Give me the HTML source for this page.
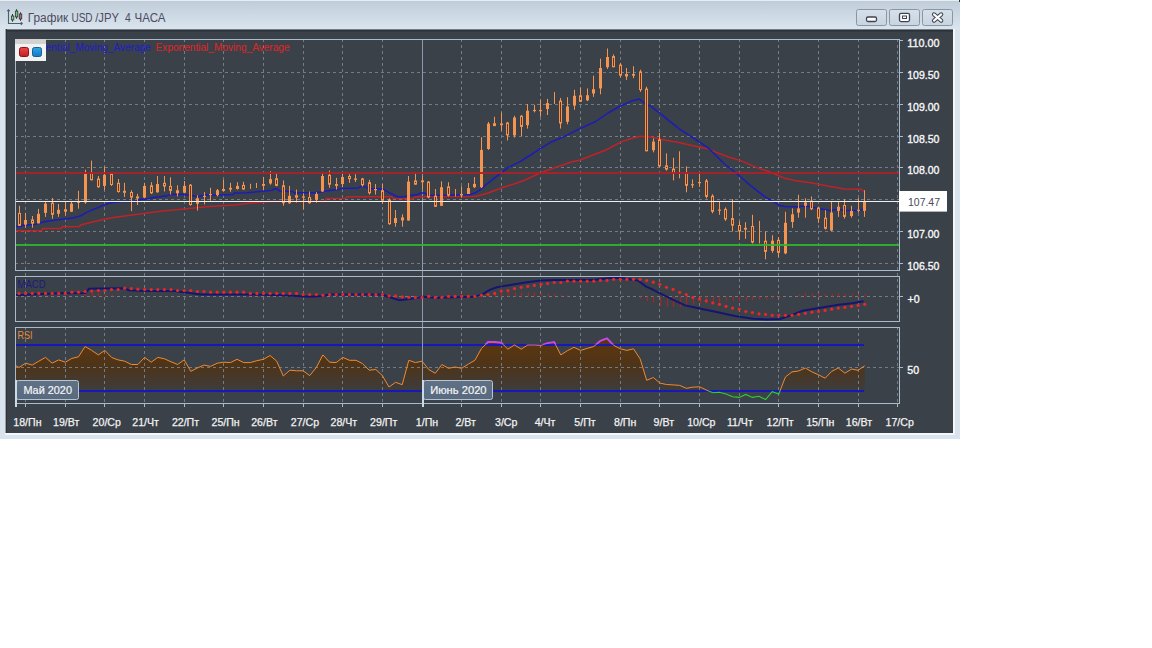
<!DOCTYPE html><html><head><meta charset="utf-8"><title>chart</title><style>html,body{margin:0;padding:0;background:#fff;width:1152px;height:648px;overflow:hidden}svg{position:absolute;left:0;top:0;font-family:"Liberation Sans",sans-serif}</style></head><body>
<svg width="1152" height="648" viewBox="0 0 1152 648">
<defs>
<linearGradient id="tb" x1="0" y1="0" x2="0" y2="1"><stop offset="0" stop-color="#c0cdd8"/><stop offset="1" stop-color="#d9e4ee"/></linearGradient>
<linearGradient id="btn" x1="0" y1="0" x2="0" y2="1"><stop offset="0" stop-color="#d6e0ea"/><stop offset="1" stop-color="#c8d4e0"/></linearGradient>
<linearGradient id="rsif" gradientUnits="userSpaceOnUse" x1="0" y1="345" x2="0" y2="391"><stop offset="0" stop-color="#5a3610"/><stop offset="0.45" stop-color="#4e3418"/><stop offset="1" stop-color="#3d3d3e"/></linearGradient>
<linearGradient id="redsq" x1="0" y1="0" x2="0" y2="1"><stop offset="0" stop-color="#f04848"/><stop offset="1" stop-color="#c01c24"/></linearGradient>
<linearGradient id="bluesq" x1="0" y1="0" x2="0" y2="1"><stop offset="0" stop-color="#30a8e8"/><stop offset="1" stop-color="#1478c0"/></linearGradient>
<linearGradient id="lblg" x1="0" y1="0" x2="0" y2="1"><stop offset="0" stop-color="#607186"/><stop offset="1" stop-color="#59697e"/></linearGradient>
</defs>
<rect x="0" y="0" width="960" height="439" fill="#d9e3ed"/>
<rect x="0" y="1" width="960" height="28" fill="url(#tb)"/>
<rect x="0" y="0" width="960" height="1" fill="#e6edf4"/>
<rect x="959" y="0" width="1" height="2" fill="#333"/>
<rect x="5" y="29" width="950" height="406" fill="#f4f7fa"/>
<rect x="5" y="29" width="948" height="404" fill="#3a4149"/>
<rect x="5" y="29" width="948" height="1" fill="#767c84"/>
<rect x="5" y="30" width="948" height="1.5" fill="#2c3239"/>
<rect x="5" y="29" width="1" height="404" fill="#9aa0a6"/>
<rect x="6" y="29" width="1" height="404" fill="#2e343a"/>
<g fill="none"><path d="M8.5 10 V23.5 H22" stroke="#4c5e6c" stroke-width="1.1"/><path d="M7 11 L8.5 9.3 L10 11 Z M21 22 L22.8 23.5 L21 25 Z" fill="#4c5e6c" stroke="#4c5e6c" stroke-width="0.6"/><path d="M12.5 14 V21.7 M16.6 9.2 V18.8 M20.5 12.3 V20.8" stroke="#2c3a34" stroke-width="1"/></g><rect x="11.4" y="16" width="2.4" height="3.9" fill="#8cc890" stroke="#2e4a34" stroke-width="0.9"/><rect x="15.4" y="11.1" width="2.4" height="5.8" fill="#7cc080" stroke="#2e4a34" stroke-width="0.9"/><rect x="19.3" y="14" width="2.4" height="4.9" fill="#a87888" stroke="#4a2e3a" stroke-width="0.9"/>
<text x="27.8" y="22" font-size="12" fill="#4d4b5f" textLength="40.4" lengthAdjust="spacingAndGlyphs">График</text>
<text x="71.4" y="22" font-size="12" fill="#4d4b5f" textLength="21.2" lengthAdjust="spacingAndGlyphs">USD</text>
<text x="95.2" y="22" font-size="12" fill="#4d4b5f" textLength="23.8" lengthAdjust="spacingAndGlyphs">/JPY</text>
<text x="124.9" y="22" font-size="12" fill="#4d4b5f" textLength="5.8" lengthAdjust="spacingAndGlyphs">4</text>
<text x="134.6" y="22" font-size="12" fill="#4d4b5f" textLength="30.9" lengthAdjust="spacingAndGlyphs">ЧАСА</text>
<rect x="856.5" y="9.5" width="30" height="16" rx="2" fill="url(#btn)" stroke="#8a96a4" stroke-width="1"/>
<rect x="889.5" y="9.5" width="30" height="16" rx="2" fill="url(#btn)" stroke="#8a96a4" stroke-width="1"/>
<rect x="922.5" y="9.5" width="30" height="16" rx="2" fill="url(#btn)" stroke="#8a96a4" stroke-width="1"/>
<rect x="866.5" y="17" width="10" height="4.5" rx="1.5" fill="#fbfcfd" stroke="#3e4450" stroke-width="1.3"/>
<rect x="899.5" y="13.3" width="10" height="8.3" rx="1.5" fill="#fbfcfd" stroke="#3e4450" stroke-width="1.3"/>
<rect x="902.5" y="16" width="4" height="2.5" fill="none" stroke="#3e4450" stroke-width="1"/>
<path d="M934 14.4 L941.2 20.6 M941.2 14.4 L934 20.6" stroke="#3e4450" stroke-width="4.2" stroke-linecap="round"/>
<path d="M934 14.4 L941.2 20.6 M941.2 14.4 L934 20.6" stroke="#fbfcfd" stroke-width="2.1" stroke-linecap="round"/>
<path d="M15.5 365.5 L19 367.5 L25.6 363.2 L32.2 365.1 L38.8 361.2 L45.5 357.4 L52.1 363.2 L58.7 359.9 L65.3 362.2 L71.9 358.4 L78.5 356.8 L85.1 346.5 L91.7 350.4 L98.3 354.9 L104.9 350.4 L111.5 357.4 L118.1 359.9 L124.7 361.2 L131.3 364.5 L137.9 364.5 L144.6 357.4 L151.2 362.2 L157.8 357.4 L164.4 358.8 L171 361.8 L177.6 364.5 L184.2 359.9 L190.8 371.4 L197.4 367.9 L204 365.1 L210.6 366.4 L217.2 363.2 L223.8 362.2 L230.4 362.6 L237.1 359.3 L243.7 362.6 L250.3 362.6 L256.9 360.7 L263.5 359.3 L270.1 355.5 L276.7 361.2 L283.3 376 L289.9 370.2 L296.5 370.8 L303.1 370.8 L309.7 375.6 L316.3 367.5 L322.9 354.9 L329.6 362.2 L336.2 362.6 L342.8 357.4 L349.4 360.3 L356 360.3 L362.6 363.7 L369.2 370.2 L375.8 369.5 L382.4 375.6 L389 387 L395.6 382.3 L402.2 384.7 L408.8 360.3 L415.4 362.6 L422.1 361.2 L428.7 369.5 L435.3 373.3 L441.9 364.5 L448.5 368.3 L455.1 367 L461.7 368.3 L468.3 364.1 L474.9 360.3 L481.5 348.4 L488.1 342.1 L494.7 342.1 L501.3 342.7 L507.9 349.2 L514.5 345 L521.2 349.2 L527.8 345 L534.4 345 L541 345.4 L547.6 343.1 L554.2 342.1 L560.8 354.9 L567.4 350.7 L574 347.3 L580.6 350.4 L587.2 348.4 L593.8 346.5 L600.4 340.8 L607 338.3 L613.7 345.4 L620.3 348.8 L626.9 350.4 L633.5 348.8 L640.1 358.8 L646.7 380.3 L653.3 377.5 L659.9 383.1 L666.5 384.5 L673.1 384.9 L679.7 385.4 L686.3 388.3 L692.9 387.2 L699.5 386.8 L706.2 389.9 L712.8 390.8 L719.4 390.8 L726 390.8 L732.6 390.8 L739.2 390.8 L745.8 390.8 L752.4 390.8 L759 390.8 L765.6 390.8 L772.2 390.8 L778.8 390.8 L785.4 377 L792 371.9 L798.6 371 L805.3 368 L811.9 371.9 L818.5 374.8 L825.1 378.2 L831.7 371.4 L838.3 368 L844.9 373.2 L851.5 369.1 L858.1 370.3 L864.7 365.8 L864.7 390.8 L15.5 390.8 Z" fill="url(#rsif)"/>
<path d="M25.5 39V270.5 M65.5 39V270.5 M104.5 39V270.5 M144.5 39V270.5 M184.5 39V270.5 M223.5 39V270.5 M263.5 39V270.5 M303.5 39V270.5 M342.5 39V270.5 M382.5 39V270.5 M461.5 39V270.5 M501.5 39V270.5 M540.5 39V270.5 M580.5 39V270.5 M620.5 39V270.5 M659.5 39V270.5 M699.5 39V270.5 M739.5 39V270.5 M778.5 39V270.5 M818.5 39V270.5 M858.5 39V270.5 M897.5 39V270.5 M25.5 273V321.5 M65.5 273V321.5 M104.5 273V321.5 M144.5 273V321.5 M184.5 273V321.5 M223.5 273V321.5 M263.5 273V321.5 M303.5 273V321.5 M342.5 273V321.5 M382.5 273V321.5 M461.5 273V321.5 M501.5 273V321.5 M540.5 273V321.5 M580.5 273V321.5 M620.5 273V321.5 M659.5 273V321.5 M699.5 273V321.5 M739.5 273V321.5 M778.5 273V321.5 M818.5 273V321.5 M858.5 273V321.5 M897.5 273V321.5 M25.5 327V403.5 M65.5 327V403.5 M104.5 327V403.5 M144.5 327V403.5 M184.5 327V403.5 M223.5 327V403.5 M263.5 327V403.5 M303.5 327V403.5 M342.5 327V403.5 M382.5 327V403.5 M461.5 327V403.5 M501.5 327V403.5 M540.5 327V403.5 M580.5 327V403.5 M620.5 327V403.5 M659.5 327V403.5 M699.5 327V403.5 M739.5 327V403.5 M778.5 327V403.5 M818.5 327V403.5 M858.5 327V403.5 M897.5 327V403.5" stroke="#737b85" stroke-width="1" stroke-dasharray="3 3" fill="none"/>
<path d="M15 72.5H899 M15 104.5H899 M15 136.5H899 M15 167.5H899 M15 199.5H899 M15 231.5H899 M15 263.5H899 M15 296.5H899" stroke="#737b85" stroke-width="1" stroke-dasharray="3 3" fill="none"/>
<path d="M15 367.5H899" stroke="#737b85" stroke-width="1" stroke-dasharray="3 3" fill="none"/>
<path d="M16 345H864 M16 390.9H864" stroke="#1818b8" stroke-width="2" fill="none"/>
<clipPath id="cmid"><rect x="0" y="344.2" width="1152" height="46.8"/></clipPath>
<clipPath id="ctop"><rect x="0" y="300" width="1152" height="44.2"/></clipPath>
<clipPath id="cbot"><rect x="0" y="391" width="1152" height="20"/></clipPath>
<path d="M15.5 365.5 L19 367.5 L25.6 363.2 L32.2 365.1 L38.8 361.2 L45.5 357.4 L52.1 363.2 L58.7 359.9 L65.3 362.2 L71.9 358.4 L78.5 356.8 L85.1 346.5 L91.7 350.4 L98.3 354.9 L104.9 350.4 L111.5 357.4 L118.1 359.9 L124.7 361.2 L131.3 364.5 L137.9 364.5 L144.6 357.4 L151.2 362.2 L157.8 357.4 L164.4 358.8 L171 361.8 L177.6 364.5 L184.2 359.9 L190.8 371.4 L197.4 367.9 L204 365.1 L210.6 366.4 L217.2 363.2 L223.8 362.2 L230.4 362.6 L237.1 359.3 L243.7 362.6 L250.3 362.6 L256.9 360.7 L263.5 359.3 L270.1 355.5 L276.7 361.2 L283.3 376 L289.9 370.2 L296.5 370.8 L303.1 370.8 L309.7 375.6 L316.3 367.5 L322.9 354.9 L329.6 362.2 L336.2 362.6 L342.8 357.4 L349.4 360.3 L356 360.3 L362.6 363.7 L369.2 370.2 L375.8 369.5 L382.4 375.6 L389 387 L395.6 382.3 L402.2 384.7 L408.8 360.3 L415.4 362.6 L422.1 361.2 L428.7 369.5 L435.3 373.3 L441.9 364.5 L448.5 368.3 L455.1 367 L461.7 368.3 L468.3 364.1 L474.9 360.3 L481.5 348.4 L488.1 342.1 L494.7 342.1 L501.3 342.7 L507.9 349.2 L514.5 345 L521.2 349.2 L527.8 345 L534.4 345 L541 345.4 L547.6 343.1 L554.2 342.1 L560.8 354.9 L567.4 350.7 L574 347.3 L580.6 350.4 L587.2 348.4 L593.8 346.5 L600.4 340.8 L607 338.3 L613.7 345.4 L620.3 348.8 L626.9 350.4 L633.5 348.8 L640.1 358.8 L646.7 380.3 L653.3 377.5 L659.9 383.1 L666.5 384.5 L673.1 384.9 L679.7 385.4 L686.3 388.3 L692.9 387.2 L699.5 386.8 L706.2 389.9 L712.8 392.8 L719.4 392.2 L726 394 L732.6 396.7 L739.2 397.4 L745.8 394.4 L752.4 397.4 L759 396.2 L765.6 399.6 L772.2 391.7 L778.8 394 L785.4 377 L792 371.9 L798.6 371 L805.3 368 L811.9 371.9 L818.5 374.8 L825.1 378.2 L831.7 371.4 L838.3 368 L844.9 373.2 L851.5 369.1 L858.1 370.3 L864.7 365.8" stroke="#f08a30" stroke-width="1" fill="none" clip-path="url(#cmid)"/>
<path d="M15.5 365.5 L19 367.5 L25.6 363.2 L32.2 365.1 L38.8 361.2 L45.5 357.4 L52.1 363.2 L58.7 359.9 L65.3 362.2 L71.9 358.4 L78.5 356.8 L85.1 346.5 L91.7 350.4 L98.3 354.9 L104.9 350.4 L111.5 357.4 L118.1 359.9 L124.7 361.2 L131.3 364.5 L137.9 364.5 L144.6 357.4 L151.2 362.2 L157.8 357.4 L164.4 358.8 L171 361.8 L177.6 364.5 L184.2 359.9 L190.8 371.4 L197.4 367.9 L204 365.1 L210.6 366.4 L217.2 363.2 L223.8 362.2 L230.4 362.6 L237.1 359.3 L243.7 362.6 L250.3 362.6 L256.9 360.7 L263.5 359.3 L270.1 355.5 L276.7 361.2 L283.3 376 L289.9 370.2 L296.5 370.8 L303.1 370.8 L309.7 375.6 L316.3 367.5 L322.9 354.9 L329.6 362.2 L336.2 362.6 L342.8 357.4 L349.4 360.3 L356 360.3 L362.6 363.7 L369.2 370.2 L375.8 369.5 L382.4 375.6 L389 387 L395.6 382.3 L402.2 384.7 L408.8 360.3 L415.4 362.6 L422.1 361.2 L428.7 369.5 L435.3 373.3 L441.9 364.5 L448.5 368.3 L455.1 367 L461.7 368.3 L468.3 364.1 L474.9 360.3 L481.5 348.4 L488.1 342.1 L494.7 342.1 L501.3 342.7 L507.9 349.2 L514.5 345 L521.2 349.2 L527.8 345 L534.4 345 L541 345.4 L547.6 343.1 L554.2 342.1 L560.8 354.9 L567.4 350.7 L574 347.3 L580.6 350.4 L587.2 348.4 L593.8 346.5 L600.4 340.8 L607 338.3 L613.7 345.4 L620.3 348.8 L626.9 350.4 L633.5 348.8 L640.1 358.8 L646.7 380.3 L653.3 377.5 L659.9 383.1 L666.5 384.5 L673.1 384.9 L679.7 385.4 L686.3 388.3 L692.9 387.2 L699.5 386.8 L706.2 389.9 L712.8 392.8 L719.4 392.2 L726 394 L732.6 396.7 L739.2 397.4 L745.8 394.4 L752.4 397.4 L759 396.2 L765.6 399.6 L772.2 391.7 L778.8 394 L785.4 377 L792 371.9 L798.6 371 L805.3 368 L811.9 371.9 L818.5 374.8 L825.1 378.2 L831.7 371.4 L838.3 368 L844.9 373.2 L851.5 369.1 L858.1 370.3 L864.7 365.8" stroke="#c848e8" stroke-width="2" fill="none" clip-path="url(#ctop)"/>
<path d="M15.5 365.5 L19 367.5 L25.6 363.2 L32.2 365.1 L38.8 361.2 L45.5 357.4 L52.1 363.2 L58.7 359.9 L65.3 362.2 L71.9 358.4 L78.5 356.8 L85.1 346.5 L91.7 350.4 L98.3 354.9 L104.9 350.4 L111.5 357.4 L118.1 359.9 L124.7 361.2 L131.3 364.5 L137.9 364.5 L144.6 357.4 L151.2 362.2 L157.8 357.4 L164.4 358.8 L171 361.8 L177.6 364.5 L184.2 359.9 L190.8 371.4 L197.4 367.9 L204 365.1 L210.6 366.4 L217.2 363.2 L223.8 362.2 L230.4 362.6 L237.1 359.3 L243.7 362.6 L250.3 362.6 L256.9 360.7 L263.5 359.3 L270.1 355.5 L276.7 361.2 L283.3 376 L289.9 370.2 L296.5 370.8 L303.1 370.8 L309.7 375.6 L316.3 367.5 L322.9 354.9 L329.6 362.2 L336.2 362.6 L342.8 357.4 L349.4 360.3 L356 360.3 L362.6 363.7 L369.2 370.2 L375.8 369.5 L382.4 375.6 L389 387 L395.6 382.3 L402.2 384.7 L408.8 360.3 L415.4 362.6 L422.1 361.2 L428.7 369.5 L435.3 373.3 L441.9 364.5 L448.5 368.3 L455.1 367 L461.7 368.3 L468.3 364.1 L474.9 360.3 L481.5 348.4 L488.1 342.1 L494.7 342.1 L501.3 342.7 L507.9 349.2 L514.5 345 L521.2 349.2 L527.8 345 L534.4 345 L541 345.4 L547.6 343.1 L554.2 342.1 L560.8 354.9 L567.4 350.7 L574 347.3 L580.6 350.4 L587.2 348.4 L593.8 346.5 L600.4 340.8 L607 338.3 L613.7 345.4 L620.3 348.8 L626.9 350.4 L633.5 348.8 L640.1 358.8 L646.7 380.3 L653.3 377.5 L659.9 383.1 L666.5 384.5 L673.1 384.9 L679.7 385.4 L686.3 388.3 L692.9 387.2 L699.5 386.8 L706.2 389.9 L712.8 392.8 L719.4 392.2 L726 394 L732.6 396.7 L739.2 397.4 L745.8 394.4 L752.4 397.4 L759 396.2 L765.6 399.6 L772.2 391.7 L778.8 394 L785.4 377 L792 371.9 L798.6 371 L805.3 368 L811.9 371.9 L818.5 374.8 L825.1 378.2 L831.7 371.4 L838.3 368 L844.9 373.2 L851.5 369.1 L858.1 370.3 L864.7 365.8" stroke="#30d030" stroke-width="1.1" fill="none" clip-path="url(#cbot)"/>
<path d="M422.5 40V404" stroke="#8a9aaa" stroke-width="1" fill="none"/>
<path d="M15 230.8 L41.8 230.8 L42.4 228.6 L61.5 228.6 L62.1 226.8 L79.7 226.6 L80.3 225 L92.7 222 L104.3 219.3 L114.9 217.3 L128.6 215.5 L147.7 212.9 L160.4 211.2 L184.2 208.9 L206.7 206.8 L234.5 204.9 L253.6 202.8 L267.5 201.7 L272 201.5 L325 201.5 L326 198.5 L345.7 198.3 L347 196.8 L391.8 196.8 L393 198.3 L412.8 198.9 L415.3 197 L428 196.6 L475 196.6 L482 194.7 L488.5 193 L494.7 190.5 L500 188.5 L506.3 186.2 L514 184 L523.8 180.5 L540.7 172.7 L556 167.3 L571.3 162 L580 160 L606 150 L621.2 141.9 L631.4 138.5 L640 136.3 L653 137.2 L661.6 139.4 L678.9 142.6 L694 145.9 L709.1 149.1 L712.4 150.9 L727.2 156.5 L742 161.1 L756.9 167.6 L768 171.3 L779.1 175.9 L784.8 178.3 L795 180.4 L812 182.9 L828.9 186.3 L844.2 188.9 L861.2 189.2 L863.7 191.4" stroke="#c02226" stroke-width="1.5" fill="none" stroke-linejoin="round"/>
<path d="M15 226.5 L21.4 226.3 L22 225.2 L34.4 224.6 L40.5 222.8 L48.6 220.9 L66.5 218.8 L74 217.8 L80.3 216 L86.5 212.4 L92.7 209.8 L98.9 207.3 L105 204.4 L111.2 202.8 L121.7 201.6 L134 201.4 L142.1 199.2 L148 198.8 L152.3 197.7 L167.2 195.8 L169.6 194.6 L180.7 194.3 L189.4 195.2 L198 196.4 L204.2 195.2 L220 194.9 L233.6 194.6 L234.2 193.1 L247.2 192.7 L260.1 191.5 L272.5 190.2 L273.7 189 L277.4 189 L279.3 190.9 L292.6 191.5 L293.9 192.7 L313.6 192.7 L321 192.1 L326 190.9 L338.3 189.6 L340.8 188.6 L358.1 188.1 L360.5 186.5 L365.3 186.5 L367.7 188.4 L382.5 189 L388.1 192.1 L398 197 L402.9 197 L407.9 195.8 L417.7 194.6 L420.2 193.1 L425.1 193.1 L427.6 195.2 L436 195.5 L470 194.7 L475.4 192.8 L480.8 189.3 L487 183.9 L494.7 177.8 L501.6 172.7 L507.8 167.7 L520 161.6 L530.6 155 L540.7 148.4 L550.9 142.2 L562.8 137.1 L571.3 132.8 L580 128.6 L595.8 121.5 L608 113 L619.5 106.5 L631.4 101.1 L639.1 99.1 L646.7 104.5 L652 107.1 L661.6 114.6 L678.9 128.6 L694 138.3 L709.1 148.7 L723.5 163 L738.3 175 L751.3 186.1 L764.3 196.3 L775.4 202.8 L779.1 205.2 L785 206.6 L798.4 206.7 L805.2 205.8 L818.7 208.4 L828.9 210.6 L837.4 209.2 L844.2 210.6 L857.8 210.6 L863.7 209.2" stroke="#1c1cb8" stroke-width="1.5" fill="none" stroke-linejoin="round"/>
<path d="M19.5 205.8V226 M25.5 212.9V227.7 M32.5 216V227.7 M38.5 208.9V223.4 M45.5 201.8V216.9 M52.5 198V218.8 M58.5 204V216.9 M65.5 202V215.7 M71.5 202V212 M78.5 190.8V208.7 M85.5 169.8V203.8 M91.5 160.6V180.3 M98.5 176V187.7 M104.5 166.7V190.2 M111.5 172.7V185.9 M118.5 179V192.7 M124.5 182.8V197 M131.5 190.2V211.2 M137.5 193.9V205 M144.5 182.8V198.2 M151.5 182.2V194 M157.5 176V192.7 M164.5 176V191.5 M170.5 177.3V194.6 M177.5 185.3V196.4 M184.5 181V193.3 M190.5 184V205.7 M197.5 195.2V210.6 M204.5 192.1V204.4 M210.5 187.8V200.7 M217.5 189V196.4 M223.5 179.8V191.5 M230.5 182.8V191.9 M237.5 182.2V189.6 M243.5 181.8V189.6 M250.5 183.8V188.9 M256.5 182.9V188 M263.5 176.9V190.1 M270.5 171.1V184.7 M276.5 173V186.2 M283.5 180.4V205.7 M289.5 185.9V203.8 M296.5 189.6V202.6 M303.5 193.3V209.4 M309.5 191.5V203.8 M316.5 192.1V202.6 M322.5 172.3V191.9 M329.5 170.5V187.8 M336.5 177.9V189.6 M342.5 173V187.2 M349.5 174.2V182.8 M355.5 174.2V182 M362.5 177.9V186.5 M369.5 179.8V194.6 M375.5 184V194.6 M382.5 184V203.8 M389.5 198.3V224.8 M395.5 210V226.7 M402.5 214.3V226.7 M408.5 176V220.7 M415.5 173V184.7 M422.5 176V189.6 M428.5 181V198.3 M435.5 189V206.8 M441.5 181.3V205.9 M448.5 182.2V196.6 M455.5 189V196.6 M461.5 186.4V197.4 M468.5 183V194 M474.5 177V188.1 M481.5 137.2V188.1 M488.5 121.9V149.9 M494.5 116.8V126.1 M501.5 112.5V130.8 M507.5 121.8V140.5 M514.5 115.8V137.6 M521.5 115V136.2 M527.5 104V128.6 M534.5 104.8V112.4 M540.5 99.7V116.7 M547.5 98.9V115 M554.5 92.1V104 M560.5 98V128.6 M567.5 97.2V124.3 M574.5 89.8V109.8 M580.5 87.5V102 M587.5 88.4V101.1 M593.5 75.7V96.9 M600.5 58.7V94.3 M607.5 48.5V68.9 M613.5 54.4V67.2 M620.5 62.9V77.4 M626.5 68V79.9 M633.5 66.3V78.2 M640.5 69.7V91.8 M646.5 86.7V151.3 M653.5 138.3V152.4 M659.5 132.9V167.5 M666.5 153.4V170.7 M673.5 157.8V180.4 M679.5 151.3V178.3 M686.5 166.4V192.3 M692.5 179.4V188 M699.5 172.9V186.9 M706.5 179V198.4 M712.5 194.3V213.3 M719.5 201.9V214.8 M725.5 207.4V220.9 M732.5 199.1V231.5 M739.5 221.3V239.8 M745.5 222.2V238.9 M752.5 214.8V243.5 M759.5 220.9V243.5 M765.5 231.5V259.3 M772.5 235.2V252.8 M778.5 237V257.4 M785.5 211.8V254.2 M792.5 208.4V227.9 M798.5 194.8V217.7 M805.5 198.2V217.7 M811.5 196.5V210.1 M818.5 206.7V222.8 M825.5 210.1V229.6 M831.5 201.6V231.3 M838.5 201.6V216.9 M844.5 199.4V218.6 M851.5 205.8V217.7 M858.5 198.2V212.6 M864.5 190.2V216.9" stroke="#f4944e" stroke-width="1" fill="none"/>
<g fill="#f4944e"><rect x="24" y="220" width="3" height="4.6"/><rect x="37" y="213.8" width="3" height="9.6"/><rect x="44" y="203.6" width="3" height="9.3"/><rect x="57" y="209.8" width="3" height="4"/><rect x="70" y="203.6" width="3" height="8.1"/><rect x="77" y="201.7" width="3" height="1.2"/><rect x="84" y="173.5" width="3" height="29"/><rect x="103" y="174.8" width="3" height="11.1"/><rect x="143" y="185.9" width="3" height="11.7"/><rect x="156" y="184" width="3" height="8.3"/><rect x="183" y="185.9" width="3" height="6.8"/><rect x="196" y="198.3" width="3" height="5.5"/><rect x="203" y="195.8" width="3" height="1.2"/><rect x="209" y="194" width="3" height="1.2"/><rect x="216" y="190.2" width="3" height="5"/><rect x="222" y="189" width="3" height="1.9"/><rect x="229" y="187.8" width="3" height="1.8"/><rect x="236" y="185.9" width="3" height="3.1"/><rect x="262" y="184" width="3" height="1.8"/><rect x="269" y="179.1" width="3" height="4.4"/><rect x="288" y="195.8" width="3" height="7.5"/><rect x="302" y="196.4" width="3" height="1.3"/><rect x="315" y="194" width="3" height="5.8"/><rect x="321" y="176" width="3" height="15.5"/><rect x="335" y="184" width="3" height="1.9"/><rect x="341" y="177" width="3" height="7"/><rect x="354" y="178.5" width="3" height="1.3"/><rect x="374" y="189" width="3" height="1.2"/><rect x="394" y="218" width="3" height="5"/><rect x="407" y="181.6" width="3" height="38.9"/><rect x="421" y="180.4" width="3" height="1.8"/><rect x="440" y="187.2" width="3" height="18.7"/><rect x="460" y="194" width="3" height="1.5"/><rect x="467" y="188.1" width="3" height="5.9"/><rect x="473" y="183.9" width="3" height="3.3"/><rect x="480" y="149.9" width="3" height="37.3"/><rect x="487" y="123.6" width="3" height="25.4"/><rect x="500" y="123.5" width="3" height="1.7"/><rect x="513" y="117.5" width="3" height="17.9"/><rect x="526" y="110.7" width="3" height="14.5"/><rect x="533" y="109.9" width="3" height="1.2"/><rect x="539" y="110" width="3" height="1.2"/><rect x="546" y="103.1" width="3" height="5.9"/><rect x="566" y="106.5" width="3" height="15.3"/><rect x="573" y="95.8" width="3" height="9.8"/><rect x="586" y="95.2" width="3" height="5.1"/><rect x="592" y="89.2" width="3" height="4.3"/><rect x="599" y="68" width="3" height="20.4"/><rect x="606" y="57" width="3" height="10.2"/><rect x="632" y="74" width="3" height="1.7"/><rect x="652" y="141.6" width="3" height="8.6"/><rect x="691" y="184.2" width="3" height="1.2"/><rect x="698" y="182" width="3" height="1.2"/><rect x="718" y="209.6" width="3" height="1.2"/><rect x="744" y="227.8" width="3" height="1.8"/><rect x="771" y="240.7" width="3" height="10.2"/><rect x="784" y="222.8" width="3" height="30.6"/><rect x="791" y="214.3" width="3" height="7.7"/><rect x="797" y="208.4" width="3" height="4.2"/><rect x="804" y="202.4" width="3" height="3.4"/><rect x="830" y="212.6" width="3" height="17.9"/><rect x="837" y="206.7" width="3" height="4.2"/><rect x="850" y="210.9" width="3" height="5.1"/><rect x="857" y="209.6" width="3" height="1.2"/><rect x="863" y="201.6" width="3" height="9.3"/></g>
<g fill="#6a3220" stroke="#f4944e" stroke-width="1"><rect x="18.5" y="213.4" width="2" height="12"/><rect x="31.5" y="219.9" width="2" height="3.3"/><rect x="51.5" y="203.2" width="2" height="11.1"/><rect x="64.5" y="209.7" width="2" height="1.5"/><rect x="90.5" y="173.4" width="2" height="6.4"/><rect x="97.5" y="179" width="2" height="7.8"/><rect x="110.5" y="173.8" width="2" height="10.7"/><rect x="117.5" y="183.3" width="2" height="8.2"/><rect x="123.5" y="191.3" width="2" height="1"/><rect x="130.5" y="192.5" width="2" height="4.6"/><rect x="136.5" y="196.9" width="2" height="1"/><rect x="150.5" y="185.8" width="2" height="7"/><rect x="163.5" y="183.3" width="2" height="2.7"/><rect x="169.5" y="186.4" width="2" height="4"/><rect x="176.5" y="190.7" width="2" height="2.1"/><rect x="189.5" y="185.2" width="2" height="19.3"/><rect x="242.5" y="185.4" width="2" height="3.6"/><rect x="275.5" y="178.8" width="2" height="6.6"/><rect x="282.5" y="185.8" width="2" height="16.9"/><rect x="295.5" y="195.7" width="2" height="1.5"/><rect x="308.5" y="197.5" width="2" height="5.2"/><rect x="328.5" y="175.3" width="2" height="8.9"/><rect x="348.5" y="176.5" width="2" height="2.1"/><rect x="361.5" y="179" width="2" height="5.8"/><rect x="368.5" y="182.7" width="2" height="10.1"/><rect x="381.5" y="190.7" width="2" height="9.5"/><rect x="388.5" y="200" width="2" height="23.7"/><rect x="401.5" y="217.9" width="2" height="2.1"/><rect x="414.5" y="180.9" width="2" height="3.3"/><rect x="427.5" y="182.1" width="2" height="14.9"/><rect x="434.5" y="196.2" width="2" height="10.1"/><rect x="447.5" y="186.9" width="2" height="8.3"/><rect x="493.5" y="123.7" width="2" height="1.9"/><rect x="506.5" y="123.1" width="2" height="11.8"/><rect x="520.5" y="116.3" width="2" height="10.1"/><rect x="559.5" y="101.1" width="2" height="21.9"/><rect x="579.5" y="95.8" width="2" height="5.5"/><rect x="612.5" y="56.6" width="2" height="10.1"/><rect x="619.5" y="65.1" width="2" height="10.1"/><rect x="625.5" y="74.5" width="2" height="1.5"/><rect x="639.5" y="71.9" width="2" height="17.7"/><rect x="645.5" y="89.1" width="2" height="61.7"/><rect x="658.5" y="139.9" width="2" height="26"/><rect x="665.5" y="165.8" width="2" height="3.3"/><rect x="672.5" y="169.1" width="2" height="4.4"/><rect x="685.5" y="173.4" width="2" height="11.9"/><rect x="705.5" y="181" width="2" height="15.4"/><rect x="711.5" y="196.2" width="2" height="15.1"/><rect x="724.5" y="209.4" width="2" height="9.5"/><rect x="731.5" y="218.6" width="2" height="6.5"/><rect x="738.5" y="225.5" width="2" height="5.5"/><rect x="751.5" y="226.4" width="2" height="15.7"/><rect x="764.5" y="241.2" width="2" height="10.2"/><rect x="777.5" y="240.3" width="2" height="12"/><rect x="810.5" y="201.2" width="2" height="7.5"/><rect x="817.5" y="208" width="2" height="10.1"/><rect x="824.5" y="218.2" width="2" height="10.1"/><rect x="843.5" y="205.5" width="2" height="10.9"/></g>
<path d="M16 173H899" stroke="#b02028" stroke-opacity="0.92" stroke-width="2" fill="none"/>
<path d="M16 245H899" stroke="#2cb82c" stroke-opacity="0.9" stroke-width="2" fill="none"/>
<path d="M16 201.5H899" stroke="#f0f0f0" stroke-width="1.1" fill="none"/>
<path d="M85.5 296.5V293.5 M92.5 296.5V293 M98.5 296.5V293 M105.5 296.5V294 M112.5 296.5V295 M303.5 296.5V298 M310.5 296.5V298.5 M316.5 296.5V298 M389.5 296.5V299 M396.5 296.5V299.5 M402.5 296.5V299 M488.5 296.5V295 M495.5 296.5V293 M501.5 296.5V290.5 M508.5 296.5V290.5 M515.5 296.5V292.3 M521.5 296.5V292.3 M528.5 296.5V292.5 M534.5 296.5V292 M541.5 296.5V293.5 M548.5 296.5V293.5 M554.5 296.5V294 M561.5 296.5V295 M567.5 296.5V295.5 M640.5 296.5V299 M647.5 296.5V301.3 M653.5 296.5V302.5 M660.5 296.5V305.9 M667.5 296.5V307 M673.5 296.5V307 M680.5 296.5V307 M686.5 296.5V305.9 M693.5 296.5V304.7 M700.5 296.5V303.6 M706.5 296.5V303.6 M713.5 296.5V303.6 M719.5 296.5V302.5 M726.5 296.5V301.3 M733.5 296.5V301.3 M739.5 296.5V301.3 M746.5 296.5V301.3 M752.5 296.5V300.2 M759.5 296.5V299.5 M766.5 296.5V299.5 M772.5 296.5V299.1 M779.5 296.5V298.6 M799.5 296.5V294.6 M805.5 296.5V292.8 M812.5 296.5V293.4 M818.5 296.5V293.4 M825.5 296.5V294.1 M832.5 296.5V294.1 M838.5 296.5V292.8 M845.5 296.5V294.1 M852.5 296.5V294.1 M858.5 296.5V294.1 M865.5 296.5V294.1" stroke="#a02828" stroke-width="1.3" fill="none"/>
<path d="M15 295 L25 294.8 L40 294 L60 293.2 L85 293 L87 291.1 L89 288.7 L100 288.5 L125 288.2 L128.4 290.2 L147.5 291.1 L174.2 291.1 L189.5 293 L201 294.5 L250.6 294.5 L277.3 294.9 L296.4 295.9 L309.8 296.8 L323.1 295.9 L328.9 294.5 L382.3 294.5 L388.1 296.8 L399.5 300.3 L411 298.7 L422.4 296.8 L435.7 297.8 L473.9 296.8 L481.6 294.9 L489.2 290.1 L496.8 287.3 L510.2 285 L525.5 282.5 L540.8 280.6 L556 280 L594.2 280 L609.5 278.1 L621 278.1 L638.2 280.6 L645.8 286.3 L651.3 288.9 L662.6 294.6 L673.9 300.2 L685.1 305.4 L703.2 309.2 L719 312.6 L734.8 316 L752.9 318.7 L766.4 319.4 L780 319 L793.5 314.4 L802.5 310.8 L820.6 307.7 L838.6 304.7 L852.2 303.2 L863.5 301.3" stroke="#161670" stroke-width="2" fill="none"/>
<g fill="#e82828"><circle cx="19" cy="293.4" r="1.6"/><circle cx="25.6" cy="293.4" r="1.6"/><circle cx="32.2" cy="293.4" r="1.6"/><circle cx="38.8" cy="293.4" r="1.6"/><circle cx="45.5" cy="293.4" r="1.6"/><circle cx="52.1" cy="293.4" r="1.6"/><circle cx="58.7" cy="293.4" r="1.6"/><circle cx="65.3" cy="293.4" r="1.6"/><circle cx="71.9" cy="292.2" r="1.6"/><circle cx="78.5" cy="292.2" r="1.6"/><circle cx="85.1" cy="291.5" r="1.6"/><circle cx="91.7" cy="291.1" r="1.6"/><circle cx="98.3" cy="290.5" r="1.6"/><circle cx="104.9" cy="290.5" r="1.6"/><circle cx="111.5" cy="289.6" r="1.6"/><circle cx="118.1" cy="289.6" r="1.6"/><circle cx="124.7" cy="288.2" r="1.6"/><circle cx="131.3" cy="288.6" r="1.6"/><circle cx="137.9" cy="289.2" r="1.6"/><circle cx="144.6" cy="289.6" r="1.6"/><circle cx="151.2" cy="289.6" r="1.6"/><circle cx="157.8" cy="289.6" r="1.6"/><circle cx="164.4" cy="289.6" r="1.6"/><circle cx="171" cy="289.6" r="1.6"/><circle cx="177.6" cy="290.5" r="1.6"/><circle cx="184.2" cy="290.5" r="1.6"/><circle cx="190.8" cy="290.5" r="1.6"/><circle cx="197.4" cy="291.5" r="1.6"/><circle cx="204" cy="291.5" r="1.6"/><circle cx="210.6" cy="292.2" r="1.6"/><circle cx="217.2" cy="292.2" r="1.6"/><circle cx="223.8" cy="292.2" r="1.6"/><circle cx="230.4" cy="292.2" r="1.6"/><circle cx="237.1" cy="292.2" r="1.6"/><circle cx="243.7" cy="292.2" r="1.6"/><circle cx="250.3" cy="293.4" r="1.6"/><circle cx="256.9" cy="293.4" r="1.6"/><circle cx="263.5" cy="293.4" r="1.6"/><circle cx="270.1" cy="293.4" r="1.6"/><circle cx="276.7" cy="293.4" r="1.6"/><circle cx="283.3" cy="293.4" r="1.6"/><circle cx="289.9" cy="293.4" r="1.6"/><circle cx="296.5" cy="293.4" r="1.6"/><circle cx="303.1" cy="294.5" r="1.6"/><circle cx="309.7" cy="294.5" r="1.6"/><circle cx="316.3" cy="294.5" r="1.6"/><circle cx="322.9" cy="295.3" r="1.6"/><circle cx="329.6" cy="294.5" r="1.6"/><circle cx="336.2" cy="294.5" r="1.6"/><circle cx="342.8" cy="294.5" r="1.6"/><circle cx="349.4" cy="294.5" r="1.6"/><circle cx="356" cy="294.5" r="1.6"/><circle cx="362.6" cy="294.5" r="1.6"/><circle cx="369.2" cy="294.5" r="1.6"/><circle cx="375.8" cy="294.5" r="1.6"/><circle cx="382.4" cy="294.5" r="1.6"/><circle cx="389" cy="295.9" r="1.6"/><circle cx="395.6" cy="295.9" r="1.6"/><circle cx="402.2" cy="296.8" r="1.6"/><circle cx="408.8" cy="297.4" r="1.6"/><circle cx="415.4" cy="297.4" r="1.6"/><circle cx="422.1" cy="297.4" r="1.6"/><circle cx="428.7" cy="296.4" r="1.6"/><circle cx="435.3" cy="297.4" r="1.6"/><circle cx="441.9" cy="297.4" r="1.6"/><circle cx="448.5" cy="296.4" r="1.6"/><circle cx="455.1" cy="296.4" r="1.6"/><circle cx="461.7" cy="296.4" r="1.6"/><circle cx="468.3" cy="296.4" r="1.6"/><circle cx="474.9" cy="296.4" r="1.6"/><circle cx="481.5" cy="295.3" r="1.6"/><circle cx="488.1" cy="294.5" r="1.6"/><circle cx="494.7" cy="293.4" r="1.6"/><circle cx="501.3" cy="291.1" r="1.6"/><circle cx="507.9" cy="290.5" r="1.6"/><circle cx="514.5" cy="288.6" r="1.6"/><circle cx="521.2" cy="287.3" r="1.6"/><circle cx="527.8" cy="286.3" r="1.6"/><circle cx="534.4" cy="285.4" r="1.6"/><circle cx="541" cy="284.4" r="1.6"/><circle cx="547.6" cy="283.5" r="1.6"/><circle cx="554.2" cy="282.5" r="1.6"/><circle cx="560.8" cy="282.5" r="1.6"/><circle cx="567.4" cy="281.2" r="1.6"/><circle cx="574" cy="281.2" r="1.6"/><circle cx="580.6" cy="281.2" r="1.6"/><circle cx="587.2" cy="281.2" r="1.6"/><circle cx="593.8" cy="281.2" r="1.6"/><circle cx="600.4" cy="280.4" r="1.6"/><circle cx="607" cy="280.4" r="1.6"/><circle cx="613.7" cy="279.3" r="1.6"/><circle cx="620.3" cy="279.3" r="1.6"/><circle cx="626.9" cy="279.3" r="1.6"/><circle cx="633.5" cy="279.3" r="1.6"/><circle cx="640.1" cy="279.3" r="1.6"/><circle cx="646.7" cy="280.6" r="1.6"/><circle cx="653.3" cy="282.2" r="1.6"/><circle cx="659.9" cy="284.4" r="1.6"/><circle cx="666.5" cy="287.3" r="1.6"/><circle cx="673.1" cy="289.4" r="1.6"/><circle cx="679.7" cy="292.3" r="1.6"/><circle cx="686.3" cy="294.6" r="1.6"/><circle cx="692.9" cy="297.5" r="1.6"/><circle cx="699.5" cy="299.1" r="1.6"/><circle cx="706.2" cy="300.9" r="1.6"/><circle cx="712.8" cy="302.9" r="1.6"/><circle cx="719.4" cy="304.3" r="1.6"/><circle cx="726" cy="306.3" r="1.6"/><circle cx="732.6" cy="308.1" r="1.6"/><circle cx="739.2" cy="309.2" r="1.6"/><circle cx="745.8" cy="311.5" r="1.6"/><circle cx="752.4" cy="312.6" r="1.6"/><circle cx="759" cy="313.8" r="1.6"/><circle cx="765.6" cy="314.4" r="1.6"/><circle cx="772.2" cy="315.3" r="1.6"/><circle cx="778.8" cy="315.3" r="1.6"/><circle cx="785.4" cy="315.3" r="1.6"/><circle cx="792" cy="315.3" r="1.6"/><circle cx="798.6" cy="314.4" r="1.6"/><circle cx="805.3" cy="313.3" r="1.6"/><circle cx="811.9" cy="312.2" r="1.6"/><circle cx="818.5" cy="311.5" r="1.6"/><circle cx="825.1" cy="310.4" r="1.6"/><circle cx="831.7" cy="309.2" r="1.6"/><circle cx="838.3" cy="308.1" r="1.6"/><circle cx="844.9" cy="307.4" r="1.6"/><circle cx="851.5" cy="306.3" r="1.6"/><circle cx="858.1" cy="305.4" r="1.6"/><circle cx="864.7" cy="304.3" r="1.6"/></g>
<rect x="15.5" y="39.5" width="884.0" height="231.0" fill="none" stroke="#a9bacb" stroke-width="1"/>
<rect x="15.5" y="276.5" width="884.0" height="45.0" fill="none" stroke="#a9bacb" stroke-width="1"/>
<rect x="15.5" y="327.5" width="884.0" height="76.0" fill="none" stroke="#a9bacb" stroke-width="1"/>
<path d="M900 40.5H903 M900 72.5H903 M900 104.5H903 M900 136.5H903 M900 167.5H903 M900 199.5H903 M900 231.5H903 M900 263.5H903 M900 296.5H903 M900 367.5H903" stroke="#a9bacb" stroke-width="1" fill="none"/>
<path d="M25.5 404V407 M65.5 404V407 M104.5 404V407 M144.5 404V407 M184.5 404V407 M223.5 404V407 M263.5 404V407 M303.5 404V407 M342.5 404V407 M382.5 404V407 M422.5 404V407 M461.5 404V407 M501.5 404V407 M540.5 404V407 M580.5 404V407 M620.5 404V407 M659.5 404V407 M699.5 404V407 M739.5 404V407 M778.5 404V407 M818.5 404V407 M858.5 404V407 M897.5 404V407" stroke="#a9bacb" stroke-width="1" fill="none"/>
<text x="907.2" y="46.8" font-size="10.6" fill="#f6f6f6" stroke="#f6f6f6" stroke-width="0.35" textLength="32.2" lengthAdjust="spacingAndGlyphs">110.00</text>
<text x="907.2" y="78.8" font-size="10.6" fill="#f6f6f6" stroke="#f6f6f6" stroke-width="0.35" textLength="32.2" lengthAdjust="spacingAndGlyphs">109.50</text>
<text x="907.2" y="110.8" font-size="10.6" fill="#f6f6f6" stroke="#f6f6f6" stroke-width="0.35" textLength="32.2" lengthAdjust="spacingAndGlyphs">109.00</text>
<text x="907.2" y="142.8" font-size="10.6" fill="#f6f6f6" stroke="#f6f6f6" stroke-width="0.35" textLength="32.2" lengthAdjust="spacingAndGlyphs">108.50</text>
<text x="907.2" y="173.8" font-size="10.6" fill="#f6f6f6" stroke="#f6f6f6" stroke-width="0.35" textLength="32.2" lengthAdjust="spacingAndGlyphs">108.00</text>
<text x="907.2" y="237.8" font-size="10.6" fill="#f6f6f6" stroke="#f6f6f6" stroke-width="0.35" textLength="32.2" lengthAdjust="spacingAndGlyphs">107.00</text>
<text x="907.2" y="269.8" font-size="10.6" fill="#f6f6f6" stroke="#f6f6f6" stroke-width="0.35" textLength="32.2" lengthAdjust="spacingAndGlyphs">106.50</text>
<rect x="899" y="191" width="48" height="20.6" fill="#ffffff"/>
<text x="908" y="205.5" font-size="11" fill="#4a4a5a" textLength="32" lengthAdjust="spacingAndGlyphs">107.47</text>
<text x="907.5" y="302.6" font-size="10.6" fill="#f6f6f6" stroke="#f6f6f6" stroke-width="0.35">+0</text>
<text x="907.3" y="374" font-size="10.6" fill="#f6f6f6" stroke="#f6f6f6" stroke-width="0.35">50</text>
<text x="13.3" y="425.8" font-size="10.6" fill="#f2f2f2" stroke="#f2f2f2" stroke-width="0.25">18/Пн</text>
<text x="53" y="425.8" font-size="10.6" fill="#f2f2f2" stroke="#f2f2f2" stroke-width="0.25">19/Вт</text>
<text x="92.6" y="425.8" font-size="10.6" fill="#f2f2f2" stroke="#f2f2f2" stroke-width="0.25">20/Ср</text>
<text x="132.3" y="425.8" font-size="10.6" fill="#f2f2f2" stroke="#f2f2f2" stroke-width="0.25">21/Чт</text>
<text x="171.9" y="425.8" font-size="10.6" fill="#f2f2f2" stroke="#f2f2f2" stroke-width="0.25">22/Пт</text>
<text x="211.5" y="425.8" font-size="10.6" fill="#f2f2f2" stroke="#f2f2f2" stroke-width="0.25">25/Пн</text>
<text x="251.2" y="425.8" font-size="10.6" fill="#f2f2f2" stroke="#f2f2f2" stroke-width="0.25">26/Вт</text>
<text x="290.8" y="425.8" font-size="10.6" fill="#f2f2f2" stroke="#f2f2f2" stroke-width="0.25">27/Ср</text>
<text x="330.5" y="425.8" font-size="10.6" fill="#f2f2f2" stroke="#f2f2f2" stroke-width="0.25">28/Чт</text>
<text x="370.1" y="425.8" font-size="10.6" fill="#f2f2f2" stroke="#f2f2f2" stroke-width="0.25">29/Пт</text>
<text x="415.8" y="425.8" font-size="10.6" fill="#f2f2f2" stroke="#f2f2f2" stroke-width="0.25">1/Пн</text>
<text x="455.4" y="425.8" font-size="10.6" fill="#f2f2f2" stroke="#f2f2f2" stroke-width="0.25">2/Вт</text>
<text x="495" y="425.8" font-size="10.6" fill="#f2f2f2" stroke="#f2f2f2" stroke-width="0.25">3/Ср</text>
<text x="534.7" y="425.8" font-size="10.6" fill="#f2f2f2" stroke="#f2f2f2" stroke-width="0.25">4/Чт</text>
<text x="574.3" y="425.8" font-size="10.6" fill="#f2f2f2" stroke="#f2f2f2" stroke-width="0.25">5/Пт</text>
<text x="614" y="425.8" font-size="10.6" fill="#f2f2f2" stroke="#f2f2f2" stroke-width="0.25">8/Пн</text>
<text x="653.6" y="425.8" font-size="10.6" fill="#f2f2f2" stroke="#f2f2f2" stroke-width="0.25">9/Вт</text>
<text x="687.2" y="425.8" font-size="10.6" fill="#f2f2f2" stroke="#f2f2f2" stroke-width="0.25">10/Ср</text>
<text x="726.9" y="425.8" font-size="10.6" fill="#f2f2f2" stroke="#f2f2f2" stroke-width="0.25">11/Чт</text>
<text x="766.5" y="425.8" font-size="10.6" fill="#f2f2f2" stroke="#f2f2f2" stroke-width="0.25">12/Пт</text>
<text x="806.2" y="425.8" font-size="10.6" fill="#f2f2f2" stroke="#f2f2f2" stroke-width="0.25">15/Пн</text>
<text x="845.8" y="425.8" font-size="10.6" fill="#f2f2f2" stroke="#f2f2f2" stroke-width="0.25">16/Вт</text>
<text x="885.5" y="425.8" font-size="10.6" fill="#f2f2f2" stroke="#f2f2f2" stroke-width="0.25">17/Ср</text>
<rect x="16.5" y="380.5" width="62" height="19" rx="2" fill="url(#lblg)" stroke="#b4c4d2" stroke-width="1"/>
<rect x="15" y="380" width="2" height="27" fill="#c8dce8"/>
<text x="23.4" y="393.8" font-size="11.3" fill="#f4f6f8" stroke="#f4f6f8" stroke-width="0.2" textLength="48.6" lengthAdjust="spacingAndGlyphs">Май 2020</text>
<rect x="423.5" y="380.5" width="69" height="19" rx="2" fill="url(#lblg)" stroke="#b4c4d2" stroke-width="1"/>
<rect x="422" y="380" width="2" height="27" fill="#c8dce8"/>
<text x="430.2" y="393.8" font-size="11.3" fill="#f4f6f8" stroke="#f4f6f8" stroke-width="0.2" textLength="56.4" lengthAdjust="spacingAndGlyphs">Июнь 2020</text>
<text x="17.5" y="288.3" font-size="10.8" fill="#1c1c80" textLength="28" lengthAdjust="spacingAndGlyphs">MACD</text>
<text x="17.5" y="339" font-size="10.2" fill="#e88a3a" textLength="15" lengthAdjust="spacingAndGlyphs">RSI</text>
<text x="17" y="51" font-size="11" fill="#1c1cd0" textLength="134" lengthAdjust="spacingAndGlyphs">Exponential_Moving_Average</text>
<text x="155.6" y="51" font-size="11" fill="#e02424" textLength="134" lengthAdjust="spacingAndGlyphs">Exponential_Moving_Average</text>
<rect x="15" y="39" width="31" height="22" fill="#f2f2f2"/>
<rect x="15" y="39" width="31" height="5" fill="#d2d2d2"/>
<rect x="19.5" y="47.5" width="9" height="9" rx="2" fill="url(#redsq)" stroke="#901018" stroke-width="1"/>
<rect x="32.5" y="47.5" width="9" height="9" rx="2" fill="url(#bluesq)" stroke="#10609a" stroke-width="1"/>
</svg></body></html>
